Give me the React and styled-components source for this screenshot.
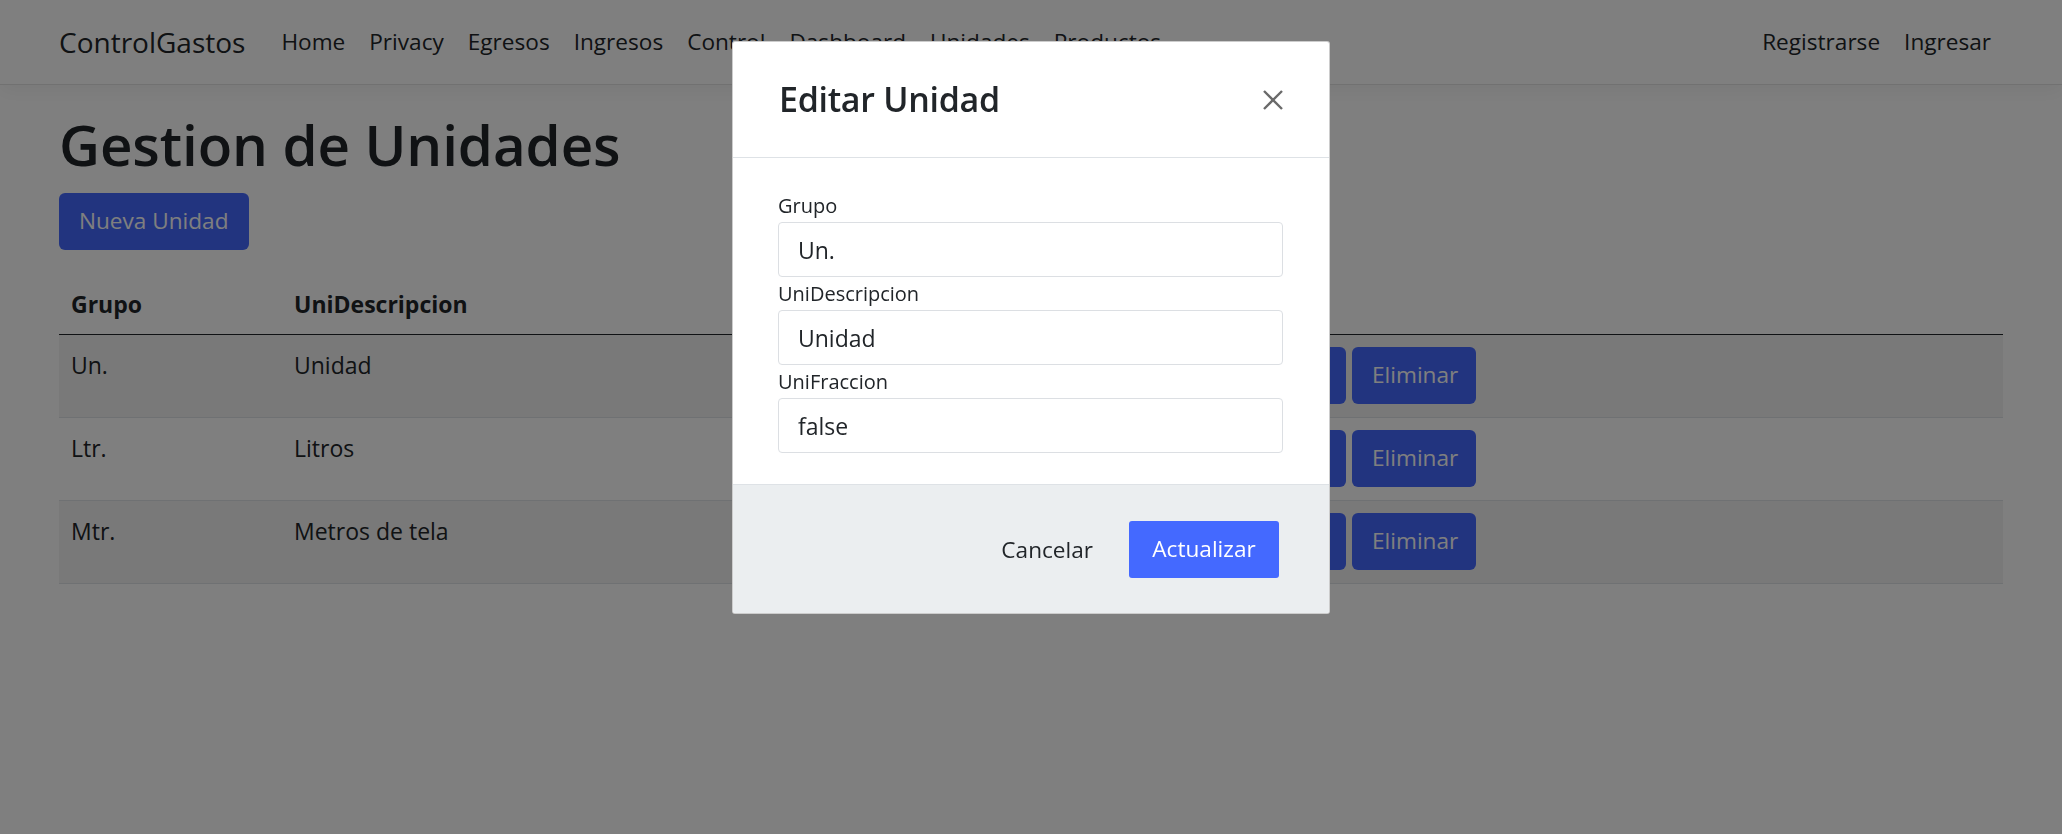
import React from "react";
import styled, { createGlobalStyle } from "styled-components";

const FONT = `"Open Sans", "Noto Sans", "Liberation Sans", sans-serif`;
const TEXT = "#212529";
const BLUE = "#4469ff";

const GlobalStyle = createGlobalStyle`
  * { box-sizing: border-box; }
  html, body { margin: 0; padding: 0; }
  body {
    font-family: ${FONT};
    font-size: 23px;
    line-height: 1.5;
    color: ${TEXT};
    background: #ffffff;
  }
`;

const Page = styled.div`
  min-height: 100vh;
`;

const Navbar = styled.header`
  height: 85px;
  background: #ffffff;
  border-bottom: 1px solid #e3e3e3;
  box-shadow: 0 6px 18px rgba(0, 0, 0, 0.05);
`;

const Container = styled.div`
  padding: 0 59px;
`;

const NavInner = styled(Container)`
  height: 100%;
  display: flex;
  align-items: center;
`;

const Brand = styled.a`
  font-size: 28px;
  color: ${TEXT};
  text-decoration: none;
  margin-right: 24px;
`;

const NavList = styled.nav`
  display: flex;
  align-items: center;
  margin-left: ${(p) => (p.$end ? "auto" : "0")};
`;

const NavLink = styled.a`
  padding: 0 12px;
  font-size: 22.6px;
  color: ${TEXT};
  text-decoration: none;
`;

const Title = styled.h1`
  margin: 24px 0 12px;
  font-size: 56.5px;
  font-weight: 600;
  line-height: 72px;
  letter-spacing: -0.1px;
`;

const Button = styled.button`
  height: 57px;
  padding: 0 20px;
  border: none;
  border-radius: ${(p) => (p.$square ? "3px" : "6px")};
  background: ${BLUE};
  color: #ffffff;
  font-family: ${FONT};
  font-size: 22.6px;
  line-height: 1;
  width: ${(p) => (p.$w ? `${p.$w}px` : "auto")};
  cursor: pointer;
`;

const LinkButton = styled.button`
  height: 57px;
  padding: 0 18px;
  border: none;
  background: transparent;
  color: ${TEXT};
  font-family: ${FONT};
  font-size: 22.6px;
  cursor: pointer;
`;

const Table = styled.table`
  width: 100%;
  margin-top: 24px;
  border-collapse: collapse;
`;

const Th = styled.th`
  width: ${(p) => (p.$w ? `${p.$w}px` : "auto")};
  padding: 12px 12px;
  text-align: left;
  font-weight: 700;
  font-size: 23px;
  line-height: 36px;
  border-bottom: 1px solid ${TEXT};
`;

const Tr = styled.tr`
  background: ${(p) => (p.$striped ? "rgba(0, 0, 0, 0.05)" : "transparent")};
`;

const Td = styled.td`
  padding: 12px 12px 13px;
  vertical-align: top;
  font-size: 23px;
  line-height: 36px;
  border-bottom: 1px solid #dee2e6;
`;

const Actions = styled.div`
  display: flex;
  gap: 6px;
`;

const Overlay = styled.div`
  position: fixed;
  inset: 0;
  background: rgba(0, 0, 0, 0.5);
  display: flex;
  justify-content: center;
  align-items: flex-start;
  padding-top: 41px;
`;

const Modal = styled.div`
  width: 598px;
  background: #ffffff;
  border: 1px solid rgba(0, 0, 0, 0.2);
  border-radius: 3px;
  overflow: hidden;
`;

const ModalHeader = styled.div`
  height: 116px;
  display: flex;
  align-items: center;
  justify-content: space-between;
  padding: 0 45px 0 46px;
  border-bottom: 1px solid #dee2e6;
`;

const ModalTitle = styled.h3`
  margin: 0;
  font-size: 34px;
  font-weight: 600;
  line-height: 1.2;
  letter-spacing: -0.3px;
  color: ${TEXT};
`;

const CloseButton = styled.button`
  width: 22px;
  height: 22px;
  padding: 0;
  border: none;
  background: transparent;
  display: flex;
  cursor: pointer;
`;

const ModalBody = styled.div`
  padding: 31px 46px 31px 45px;
`;

const Label = styled.label`
  display: block;
  font-size: 20px;
  line-height: 33px;
  color: ${TEXT};
`;

const Input = styled.input`
  display: block;
  width: 100%;
  height: 55px;
  padding: 0 19px;
  border: 1px solid #dcdfe3;
  border-radius: 4px;
  font-family: ${FONT};
  font-size: 23px;
  color: ${TEXT};
  background: #ffffff;
  outline: none;
`;

const ModalFooter = styled.div`
  display: flex;
  justify-content: flex-end;
  align-items: center;
  gap: 18px;
  padding: 36px 50px 35px;
  background: #ebeef0;
  border-top: 1px solid #dee2e6;
`;

const rows = [
  { grupo: "Un.", desc: "Unidad" },
  { grupo: "Ltr.", desc: "Litros" },
  { grupo: "Mtr.", desc: "Metros de tela" },
];

const fields = [
  { label: "Grupo", value: "Un." },
  { label: "UniDescripcion", value: "Unidad" },
  { label: "UniFraccion", value: "false" },
];

function CloseIcon() {
  return (
    <svg width="22" height="22" viewBox="0 0 22 22">
      <path d="M2 2 L20 20 M20 2 L2 20" stroke="#6a6a6a" strokeWidth="2.4" fill="none" />
    </svg>
  );
}

export default function App() {
  return (
    <Page>
      <GlobalStyle />
      <Navbar>
        <NavInner>
          <Brand href="#">ControlGastos</Brand>
          <NavList>
            {["Home", "Privacy", "Egresos", "Ingresos", "Control", "Dashboard", "Unidades", "Productos"].map((l) => (
              <NavLink key={l} href="#">{l}</NavLink>
            ))}
          </NavList>
          <NavList $end>
            <NavLink href="#">Registrarse</NavLink>
            <NavLink href="#">Ingresar</NavLink>
          </NavList>
        </NavInner>
      </Navbar>
      <Container>
        <Title>Gestion de Unidades</Title>
        <Button>Nueva Unidad</Button>
        <Table>
          <thead>
            <tr>
              <Th $w={223}>Grupo</Th>
              <Th $w={950}>UniDescripcion</Th>
              <Th></Th>
            </tr>
          </thead>
          <tbody>
            {rows.map((r, i) => (
              <Tr key={r.grupo} $striped={i % 2 === 0}>
                <Td>{r.grupo}</Td>
                <Td>{r.desc}</Td>
                <Td>
                  <Actions>
                    <Button $w={102}>Editar</Button>
                    <Button $w={124}>Eliminar</Button>
                  </Actions>
                </Td>
              </Tr>
            ))}
          </tbody>
        </Table>
      </Container>
      <Overlay>
        <Modal>
          <ModalHeader>
            <ModalTitle>Editar Unidad</ModalTitle>
            <CloseButton aria-label="Cerrar">
              <CloseIcon />
            </CloseButton>
          </ModalHeader>
          <ModalBody>
            {fields.map((f) => (
              <div key={f.label}>
                <Label>{f.label}</Label>
                <Input defaultValue={f.value} />
              </div>
            ))}
          </ModalBody>
          <ModalFooter>
            <LinkButton>Cancelar</LinkButton>
            <Button $square $w={150}>Actualizar</Button>
          </ModalFooter>
        </Modal>
      </Overlay>
    </Page>
  );
}
